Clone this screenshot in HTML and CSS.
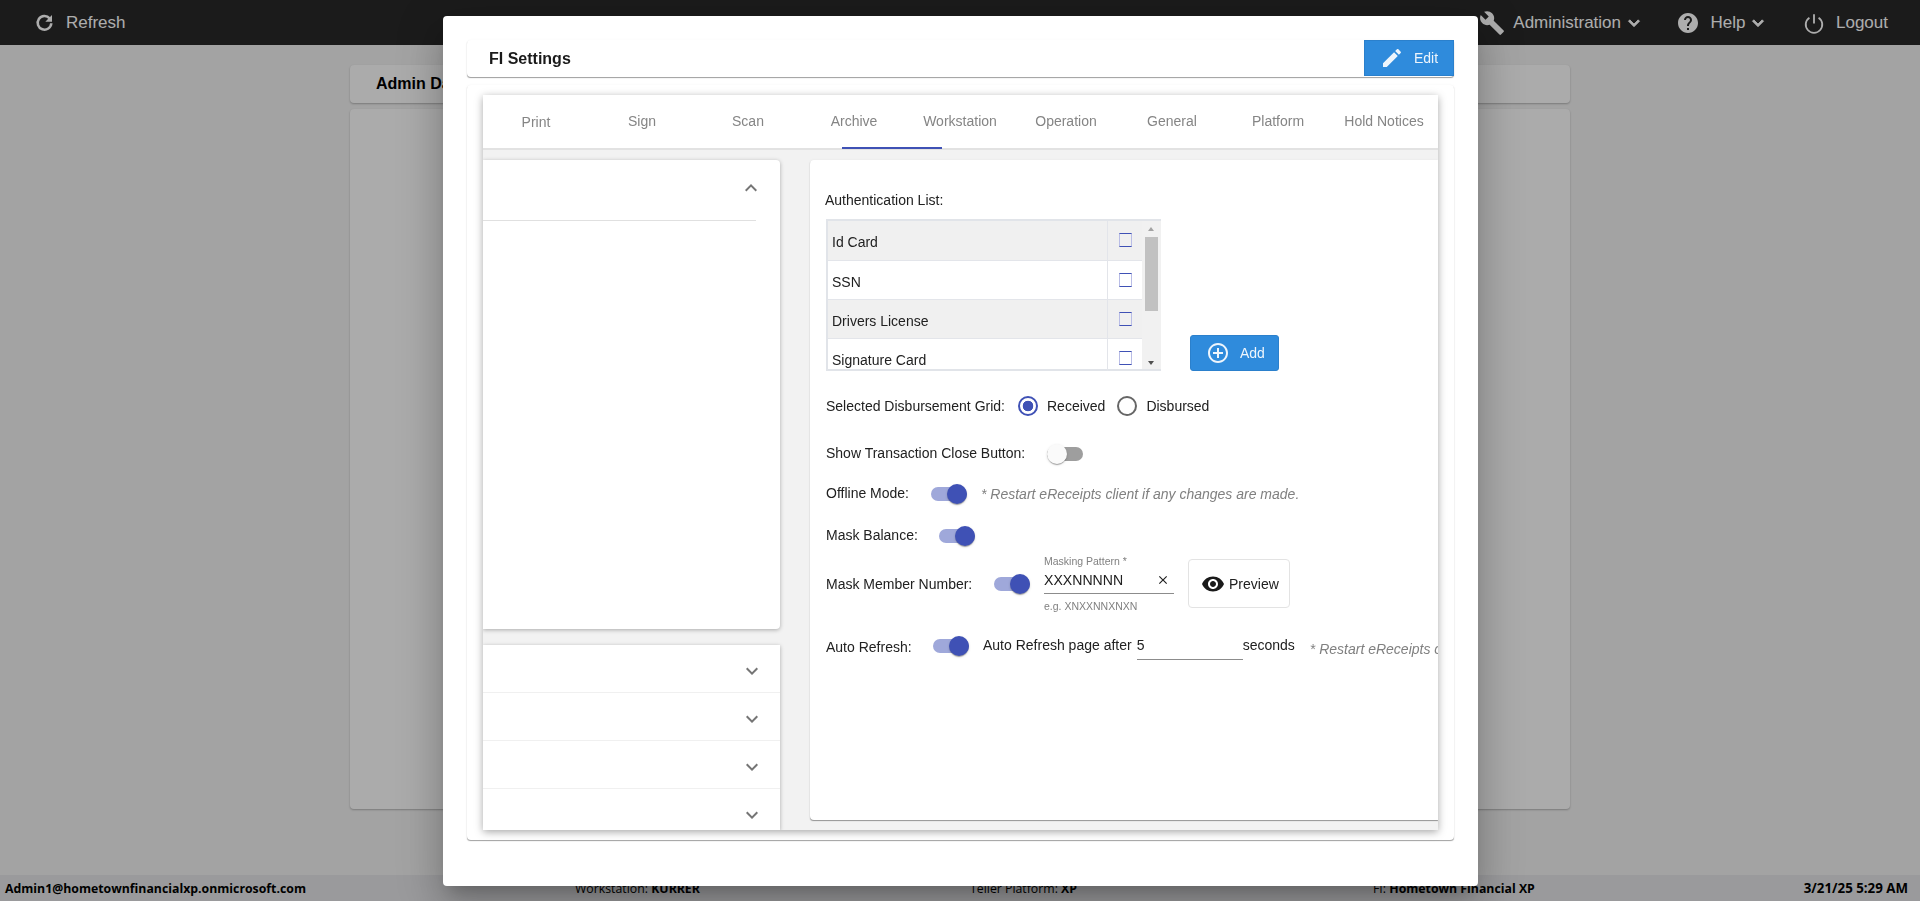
FILE: index.html
```html
<!DOCTYPE html>
<html lang="en">
<head>
<meta charset="utf-8">
<title>FI Settings</title>
<link rel="stylesheet" href="styles.css">
</head>
<body>
<svg class="defs" aria-hidden="true">
  <symbol id="chev-down" viewBox="0 0 24 24"><path d="M16.59 8.59L12 13.17 7.41 8.59 6 10l6 6 6-6z"/></symbol>
  <symbol id="chev-up" viewBox="0 0 24 24"><path d="M12 8l-6 6 1.41 1.41L12 10.83l4.59 4.58L18 14z"/></symbol>
</svg>

<header class="topbar">
  <a class="nav-item refresh">
    <svg class="ico-refresh" viewBox="0 0 24 24"><path class="stroke" d="M18.5 6.8A8.6 8.6 0 1 0 20.6 13"/><path d="M21.5 2.5v8.5H13z"/></svg>
    <span>Refresh</span>
  </a>
  <nav class="nav-right">
    <span class="hidden-icon"><i></i><i></i></span>
    <a class="nav-item admin">
      <svg class="ico-wrench" viewBox="0 0 24 24"><path d="M22.7 19l-9.1-9.1c.9-2.3.4-5-1.5-6.9-2-2-5-2.4-7.4-1.3L9 6 6 9 1.6 4.7C.4 7.1.9 10.1 2.9 12.1c1.9 1.9 4.6 2.4 6.9 1.5l9.1 9.1c.4.4 1 .4 1.4 0l2.3-2.3c.5-.4.5-1.1.1-1.4z"/></svg>
      <span>Administration</span>
      <svg class="ico-caret"><use href="#chev-down"/></svg>
    </a>
    <a class="nav-item help">
      <svg class="ico-help" viewBox="0 0 24 24"><path d="M12 2C6.48 2 2 6.48 2 12s4.48 10 10 10 10-4.48 10-10S17.52 2 12 2zm1 17h-2v-2h2v2zm2.07-7.75l-.9.92C13.45 12.9 13 13.5 13 15h-2v-.5c0-1.1.45-2.1 1.17-2.83l1.24-1.26c.37-.36.59-.86.59-1.41 0-1.1-.9-2-2-2s-2 .9-2 2H8c0-2.21 1.79-4 4-4s4 1.79 4 4c0 .88-.36 1.68-.93 2.25z"/></svg>
      <span>Help</span>
      <svg class="ico-caret"><use href="#chev-down"/></svg>
    </a>
    <a class="nav-item logout">
      <svg class="ico-power" viewBox="0 0 24 24"><path class="stroke" d="M12 2.5v10"/><path class="stroke" d="M7 6.2a9 9 0 1 0 10 0"/></svg>
      <span>Logout</span>
    </a>
  </nav>
</header>

<main class="page">
  <section class="page-card page-head"><h2>Admin Dashboard</h2></section>
  <section class="page-card page-body"></section>
</main>

<footer class="statusbar">
  <b>Admin1@hometownfinancialxp.onmicrosoft.com</b>
  <span>Workstation: <b>KURRER</b></span>
  <span>Teller Platform: <b>XP</b></span>
  <span>FI: <b>Hometown Financial XP</b></span>
  <b class="status-date">3/21/25 5:29 AM</b>
</footer>

<div class="backdrop"></div>

<div class="modal" role="dialog">
  <div class="fi-head">
    <h3>FI Settings</h3>
    <button class="btn-blue btn-edit">
      <svg viewBox="0 0 24 24"><path d="M3 17.25V21h3.75L17.81 9.94l-3.75-3.75L3 17.25zM20.71 7.04c.39-.39.39-1.02 0-1.41l-2.34-2.34c-.39-.39-1.02-.39-1.41 0l-1.83 1.83 3.75 3.75 1.83-1.83z"/></svg>
      <span>Edit</span>
    </button>
  </div>

  <div class="fi-card">
    <div class="tab-card">
      <div class="tabs">
        <span class="tab tab-low">Print</span>
        <span class="tab">Sign</span>
        <span class="tab">Scan</span>
        <span class="tab">Archive</span>
        <span class="tab">Workstation</span>
        <span class="tab">Operation</span>
        <span class="tab">General</span>
        <span class="tab">Platform</span>
        <span class="tab">Hold Notices</span>
        <i class="ink-bar"></i>
      </div>

      <div class="tab-body">
        <aside class="side">
          <div class="side-open">
            <div class="side-open-head"><svg class="ico-chev"><use href="#chev-up"/></svg></div>
          </div>
          <div class="side-list">
            <div class="side-row"><svg class="ico-chev"><use href="#chev-down"/></svg></div>
            <div class="side-row"><svg class="ico-chev"><use href="#chev-down"/></svg></div>
            <div class="side-row"><svg class="ico-chev"><use href="#chev-down"/></svg></div>
            <div class="side-row"><svg class="ico-chev"><use href="#chev-down"/></svg></div>
          </div>
        </aside>

        <section class="form">
          <div class="auth-label">Authentication List:</div>
          <div class="auth-row">
            <div class="auth-list">
              <div class="auth-scroll">
                <table class="auth-table">
                  <tr class="odd"><td class="c-name">Id Card</td><td class="c-check"><i class="chk"></i></td></tr>
                  <tr><td class="c-name">SSN</td><td class="c-check"><i class="chk"></i></td></tr>
                  <tr class="odd"><td class="c-name">Drivers License</td><td class="c-check"><i class="chk"></i></td></tr>
                  <tr><td class="c-name">Signature Card</td><td class="c-check"><i class="chk"></i></td></tr>
                </table>
              </div>
              <div class="scrollbar"><i class="arrow-up"></i><i class="thumb"></i><i class="arrow-down"></i></div>
            </div>
            <button class="btn-blue btn-add">
              <svg viewBox="0 0 24 24"><path d="M13 7h-2v4H7v2h4v4h2v-4h4v-2h-4V7zm-1-5C6.48 2 2 6.48 2 12s4.48 10 10 10 10-4.48 10-10S17.52 2 12 2zm0 18c-4.41 0-8-3.59-8-8s3.59-8 8-8 8 3.59 8 8-3.59 8-8 8z"/></svg>
              <span>Add</span>
            </button>
          </div>

          <div class="row row-radio">
            <span class="lbl-radio">Selected Disbursement Grid:</span>
            <i class="radio radio-on"></i><span class="radio-text">Received</span>
            <i class="radio radio-two"></i><span class="radio-text">Disbursed</span>
          </div>

          <div class="row row-close">
            <span class="lbl lbl-close">Show Transaction Close Button:</span>
            <i class="toggle"></i>
          </div>

          <div class="row row-offline">
            <span class="lbl lbl-offline">Offline Mode:</span>
            <i class="toggle toggle-on"></i>
            <em class="note">* Restart eReceipts client if any changes are made.</em>
          </div>

          <div class="row row-balance">
            <span class="lbl lbl-balance">Mask Balance:</span>
            <i class="toggle toggle-on"></i>
          </div>

          <div class="row row-member">
            <span class="lbl lbl-member">Mask Member Number:</span>
            <i class="toggle toggle-on"></i>
            <div class="field">
              <label>Masking Pattern *</label>
              <div class="field-input">
                <span>XXXNNNNN</span>
                <svg viewBox="0 0 24 24"><path d="M19 6.41L17.59 5 12 10.59 6.41 5 5 6.41 10.59 12 5 17.59 6.41 19 12 13.41 17.59 19 19 17.59 13.41 12z"/></svg>
              </div>
              <small>e.g. XNXXNNXNXN</small>
            </div>
            <button class="btn-preview">
              <svg viewBox="0 0 24 24"><path d="M12 4.5C7 4.5 2.73 7.61 1 12c1.73 4.39 6 7.5 11 7.5s9.27-3.11 11-7.5c-1.73-4.39-6-7.5-11-7.5zM12 17c-2.76 0-5-2.24-5-5s2.24-5 5-5 5 2.24 5 5-2.24 5-5 5zm0-8c-1.66 0-3 1.34-3 3s1.34 3 3 3 3-1.34 3-3-1.34-3-3-3z"/></svg>
              <span>Preview</span>
            </button>
          </div>

          <div class="row row-auto">
            <span class="lbl lbl-auto">Auto Refresh:</span>
            <i class="toggle toggle-on"></i>
            <span class="auto-text">Auto Refresh page after</span>
            <span class="auto-input">5</span>
            <span class="auto-sec">seconds</span>
            <em class="note note-auto">* Restart eReceipts client if any changes are made.</em>
          </div>
        </section>
      </div>
    </div>
  </div>
</div>
</body>
</html>
```

FILE: styles.css
```css
* { box-sizing: border-box; }
html, body { height: 100%; }
body {
  margin: 0;
  height: 901px;
  overflow: hidden;
  display: flex;
  flex-direction: column;
  background: #f0f0f0;
  color: #212529;
  font: 14px "Liberation Sans", Arial, sans-serif;
}
.defs { display: none; }
svg { fill: currentColor; display: block; flex: none; }
svg .stroke { fill: none; stroke: currentColor; }
i { display: block; }

/* top bar */
.topbar {
  height: 45px;
  flex: none;
  display: flex;
  justify-content: space-between;
  align-items: center;
  background: #292929;
  color: #fff;
  font-size: 17px;
}
.nav-item { display: flex; align-items: center; }
.refresh { margin-left: 35px; }
.ico-refresh { width: 19px; height: 19px; margin-right: 12px; }
.ico-refresh .stroke { stroke-width: 3.2; }
.nav-right { display: flex; align-items: center; padding-right: 32px; }
.hidden-icon { display: flex; gap: 2px; margin-right: 180px; height: 20px; align-self: flex-start; margin-top: 14px; }
.hidden-icon i { width: 8px; height: 8px; background: #fff; }
.ico-wrench { width: 26px; height: 26px; margin-right: 8px; }
.ico-help { width: 24px; height: 24px; margin-right: 11px; }
.ico-power { width: 22px; height: 22px; margin-right: 11px; }
.ico-power .stroke { stroke-width: 2; }
.ico-caret { width: 22px; height: 22px; margin-left: 1.5px; stroke: currentColor; stroke-width: 1; }
.admin { margin-right: 31px; }
.help { margin-right: 34px; }

/* page behind the dialog */
.page {
  flex: 1;
  padding: 20px 350px 0;
  display: flex;
  flex-direction: column;
  gap: 6px;
}
.page-card {
  background: #fcfcfc;
  border-radius: 4px;
  box-shadow: 0 1px 2px rgba(0,0,0,.25);
}
.page-head { height: 38px; display: flex; align-items: center; padding-left: 26px; }
.page-head h2 { margin: 0; font-size: 16px; font-weight: 700; color: #000; }
.page-body { height: 700px; }

.statusbar {
  height: 26px;
  flex: none;
  display: grid;
  grid-template-columns: 570px 395px 403px 1fr auto;
  align-items: center;
  padding: 0 12px 0 5px;
  background: #e3e4e6;
  color: #000;
  font: 12.3px "Open Sans", sans-serif;
}
.status-date { font-size: 13.3px; }

/* dialog */
.backdrop { position: fixed; inset: 0; background: rgba(0,0,0,.32); }
.modal {
  position: absolute;
  left: 443px;
  top: 16px;
  width: 1035px;
  height: 870px;
  padding: 24px;
  background: #fff;
  border-radius: 4px;
  box-shadow: 0 11px 15px -7px rgba(0,0,0,.2), 0 24px 38px 3px rgba(0,0,0,.14), 0 9px 46px 8px rgba(0,0,0,.12);
}
.fi-head {
  height: 37px;
  display: flex;
  justify-content: space-between;
  border-radius: 4px;
  box-shadow: 0 1px 1px -.5px rgba(0,0,0,.38), 0 0 3px rgba(0,0,0,.03);
}
.fi-head h3 {
  margin: 0 0 0 22px;
  align-self: center;
  font-size: 16px;
  font-weight: 700;
  color: #1a1a1a;
}
.btn-blue {
  display: flex;
  align-items: center;
  padding: 0;
  border: 1px solid #2b80cc;
  background: #2f8bdc;
  color: #eef5fc;
  font: 14px "Liberation Sans", Arial, sans-serif;
}
.btn-edit { width: 90px; height: 36px; padding-left: 15px; }
.btn-edit svg { width: 24px; height: 24px; margin-right: 10px; }
.btn-add { width: 89px; height: 36px; padding-left: 15px; border-radius: 3px; margin-left: 29px; }
.btn-add svg { width: 24px; height: 24px; margin-right: 10px; }

.fi-card {
  margin-top: 8px;
  height: 755px;
  padding: 10px 16px;
  border-radius: 4px;
  box-shadow: 0 1px 1px -.5px rgba(0,0,0,.36), 0 0 3px rgba(0,0,0,.04);
}
.tab-card {
  height: 735px;
  display: flex;
  flex-direction: column;
  overflow: hidden;
  box-shadow: 0 2px 8px rgba(0,0,0,.35);
}
.tabs {
  position: relative;
  height: 55px;
  flex: none;
  display: flex;
  border-bottom: 2px solid #e2e2e2;
  color: #858585;
}
.tab {
  width: 106px;
  flex: none;
  display: flex;
  align-items: center;
  justify-content: center;
  padding-bottom: 2px;
}
.tab-low { padding-top: 1px; padding-bottom: 0; }
.ink-bar {
  position: absolute;
  left: 359px;
  bottom: -1px;
  width: 100px;
  height: 2px;
  background: #3f51b5;
}
.tab-body {
  flex: 1;
  display: flex;
  align-items: flex-start;
  background: #f2f2f2;
  padding-top: 10px;
  min-height: 0;
}

/* left accordion */
.side { width: 297px; flex: none; display: flex; flex-direction: column; gap: 16px; }
.side-open {
  height: 469px;
  background: #fff;
  border-radius: 0 4px 4px 0;
  box-shadow: 0 1px 4px rgba(0,0,0,.3);
}
.side-open-head {
  height: 61px;
  width: 273px;
  border-bottom: 1px solid #e0e0e0;
  display: flex;
  justify-content: flex-end;
  align-items: center;
  padding-bottom: 5px;
}
.side-open-head .ico-chev { margin-right: -7px; }
.ico-chev { width: 24px; height: 24px; color: #757575; }
.side-list {
  height: 185px;
  background: #fff;
  box-shadow: 0 1px 4px rgba(0,0,0,.3);
}
.side-row {
  height: 48px;
  display: flex;
  justify-content: flex-end;
  align-items: center;
  padding: 4px 16px 0 0;
  border-bottom: 1px solid #f0f0f0;
}
.side-row:last-child { height: 41px; border-bottom: 0; padding-top: 10px; }

/* right form */
.form {
  width: 628px;
  height: 660px;
  flex: none;
  margin-left: 30px;
  padding: 30px 0 0 16px;
  background: #fff;
  border-radius: 4px 0 0 4px;
  box-shadow: 0 1px 1px -.5px rgba(0,0,0,.38), 0 0 3px rgba(0,0,0,.05);
  overflow: hidden;
  color: #212121;
}
.auth-label { height: 20px; line-height: 20px; margin: 0 0 9px -1px; }
.auth-row { display: flex; align-items: flex-end; }
.auth-list {
  width: 335px;
  height: 152px;
  display: flex;
  border: 2px solid #e1e4e9;
  border-right: 0;
}
.auth-scroll { width: 314px; height: 150px; overflow: hidden; flex: none; }
.auth-table { width: 314px; border-collapse: collapse; table-layout: fixed; }
.auth-table td { height: 39px; padding: 4px 0 0 4px; border: 1px solid #e3e5ea; border-top: 0; border-left: 0; }
.auth-table .odd { background: #f0f0f0; }
.auth-table .c-check { width: 35px; padding: 0; border-right: 0; }
.chk { width: 13px; height: 14px; margin-left: 11px; border: 1px solid #3f51b5; border-left-color: #b9bde6; border-right-color: #b9bde6; }
.scrollbar {
  width: 19px;
  flex: none;
  position: relative;
  background: #f1f1f1;
}
.thumb { position: absolute; left: 3px; top: 16px; width: 13px; height: 74px; background: #c1c1c1; }
.arrow-up, .arrow-down { position: absolute; left: 6px; width: 0; height: 0; border: 3.5px solid transparent; }
.arrow-up { top: 3px; border-bottom: 4px solid #a3a3a3; }
.arrow-down { bottom: 1px; border-top: 4px solid #505050; }

.row { display: flex; align-items: center; height: 24px; }
.row-radio { margin-top: 23px; }
.row-close { margin-top: 24px; }
.row-offline { margin-top: 16px; }
.row-balance { margin-top: 18px; }
.row-member { margin-top: 11px; height: 49px; }
.row-auto { margin-top: 26px; white-space: nowrap; }

.lbl-radio { width: 192px; }
.radio {
  width: 20px;
  height: 20px;
  border: 2px solid #666;
  border-radius: 50%;
  flex: none;
}
.radio-on {
  border-color: #3f51b5;
  background: radial-gradient(circle, #3f51b5 0 5px, transparent 5.6px);
}
.radio-two { margin-left: 12px; }
.radio-text { margin-left: 9px; }

.lbl { flex: none; padding-bottom: 3px; }
.lbl-close { width: 221px; }
.lbl-offline { width: 105px; }
.lbl-balance { width: 113px; }
.lbl-member { width: 168px; padding-bottom: 0; }
.lbl-auto { width: 107px; padding-bottom: 0; padding-top: 1px; }

.toggle {
  position: relative;
  width: 36px;
  height: 14px;
  flex: none;
  border-radius: 7px;
  background: #9e9e9e;
}
.toggle::after {
  content: "";
  position: absolute;
  left: 0;
  top: -3px;
  width: 20px;
  height: 20px;
  border-radius: 50%;
  background: #fafafa;
  box-shadow: 0 2px 1px -1px rgba(0,0,0,.2), 0 1px 1px rgba(0,0,0,.14), 0 1px 3px rgba(0,0,0,.12);
}
.toggle-on { background: #9fa8da; }
.toggle-on::after { left: 16px; background: #3f51b5; }
.note { color: #808080; margin-left: 14px; flex: none; padding-bottom: 1px; }
.note-auto { margin-left: 15px; padding: 5px 0 0; }

.field { width: 130px; margin-left: 14px; flex: none; align-self: flex-start; display: flex; flex-direction: column; }
.field label { font-size: 10.5px; line-height: 12px; color: #808080; margin-top: -4px; }
.field-input {
  height: 26px;
  display: flex;
  justify-content: space-between;
  align-items: center;
  border-bottom: 1px solid #8c8c8c;
  padding: 2px 4px 3px 0;
  font-size: 14.1px;
  margin-top: 1px;
}
.field-input svg { width: 14px; height: 14px; }
.field small { font-size: 10.5px; line-height: 12px; color: #808080; margin-top: 6px; }
.btn-preview {
  width: 102px;
  height: 49px;
  margin-left: 14px;
  display: flex;
  align-items: center;
  padding: 0 0 0 12px;
  background: #fff;
  border: 1px solid #e3e3e3;
  border-radius: 4px;
  color: #212121;
  font: 14px "Liberation Sans", Arial, sans-serif;
}
.btn-preview svg { width: 24px; height: 24px; margin-right: 4px; color: #1a1a1a; }
.auto-text { margin-left: 14px; flex: none; padding-bottom: 3px; }
.auto-input {
  width: 106px;
  height: 26px;
  line-height: 23px;
  margin: 0 0 -2px 5px;
  flex: none;
  border-bottom: 1px solid #8c8c8c;
}
.auto-sec { flex: none; padding-bottom: 3px; }
```
